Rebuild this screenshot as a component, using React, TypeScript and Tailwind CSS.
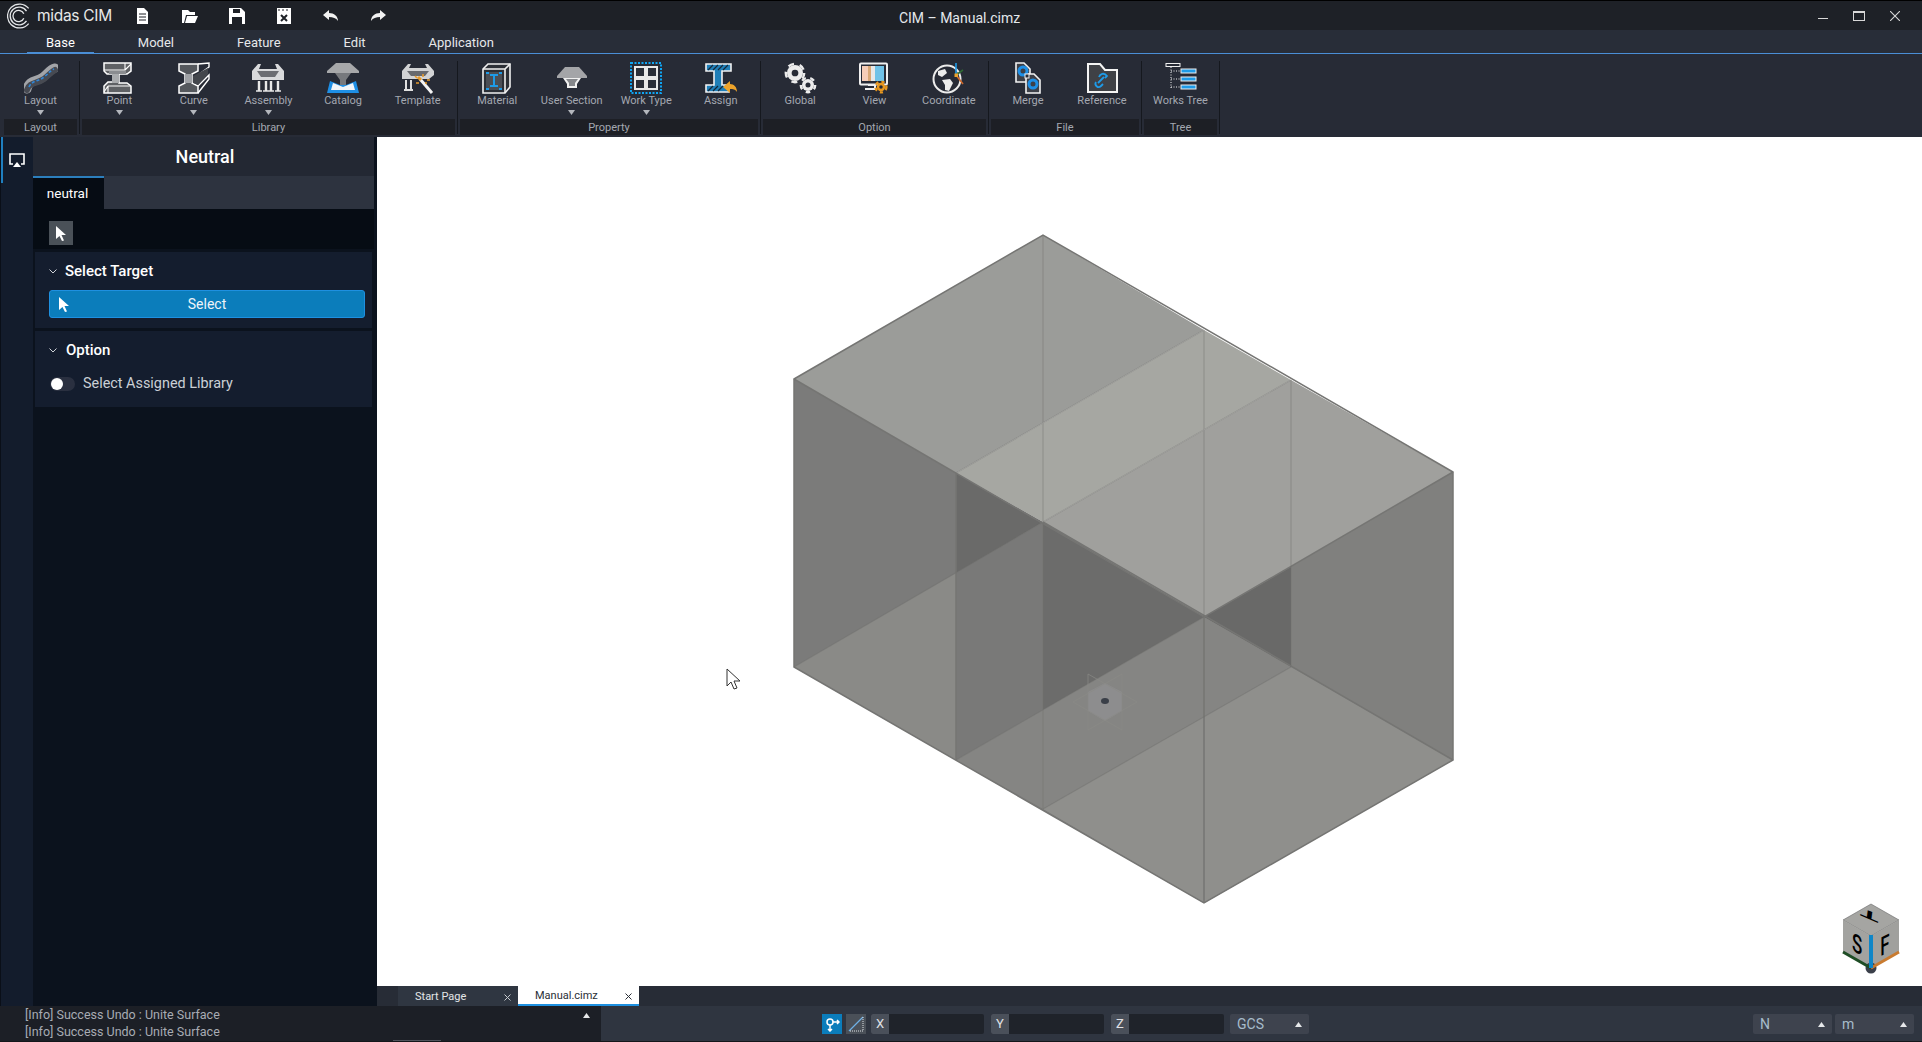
import type { ReactNode } from 'react';

const Ico = ({ children }: { children: ReactNode }) => (
  <svg width="34" height="32" viewBox="0 0 34 32" fill="none">
    {children}
  </svg>
);

const Gear = ({ x, y, r, fill, hole }: { x: number; y: number; r: number; fill: string; hole: string }) => (
  <g>
    <circle cx={x} cy={y} r={r} fill={fill} />
    <circle cx={x} cy={y} r={r + 1.2} stroke={fill} strokeWidth={2.4} strokeDasharray={`${r * 0.75} ${r * 0.75}`} />
    <circle cx={x} cy={y} r={r * 0.42} fill={hole} />
  </g>
);

const ICONS: Record<string, ReactNode> = {
  Layout: (
    <Ico>
      <path d="M3 27C5 17 13 20 19 15C24 11 26 7 31 6" stroke="#a2a4a8" strokeWidth="9" strokeLinecap="round" />
      <path d="M3 28C5 20 13 22 20 17C24 14 27 10 31 8" stroke="#474a52" strokeWidth="6" strokeLinecap="round" />
      <path d="M5 25C8 18 14 20 20 15C24 12 26 9 30 7" stroke="#2f86d8" strokeWidth="1.6" strokeDasharray="3 2" />
    </Ico>
  ),
  Point: (
    <Ico>
      <g transform="translate(-4 0)">
        <path d="M6 1H33V9L29 12H21V21H29L33 24V31H6V24L10 20H15V12H9L6 9Z" fill="#5f6165" stroke="#fff" strokeWidth="1.5" />
        <rect x="14" y="12" width="7" height="9" fill="#a9abae" />
        <path d="M6 8H27V1M27 8L33 2M10 24H33M10 24V31M10 24L6 30" stroke="#fff" strokeWidth="1.1" />
        <rect x="11" y="9" width="17" height="3" fill="#8a8c90" />
      </g>
    </Ico>
  ),
  Curve: (
    <Ico>
      <path d="M2 9V2H21V9L15 12V21L21 24V31H2V24L8 21V12Z" fill="#55585d" stroke="#fff" strokeWidth="1.5" />
      <path d="M21 2L32 1V5L21 13M21 24L32 13V17L21 31" stroke="#fff" strokeWidth="1.4" />
      <path d="M8 12H15V21H8Z" fill="#a0a2a6" />
      <path d="M16 14L31 6V12L21 23L16 21Z" fill="#43464c" />
    </Ico>
  ),
  Assembly: (
    <Ico>
      <path d="M1 18V9L7 2H10L8 7H26L24 2H27L33 9V18Z" fill="#d9dadc" />
      <path d="M6 9H28L24 15H10Z" fill="#6c6e73" />
      <path d="M8 19V29M15 19V29M20 19V29M27 19V29" stroke="#e8e8e8" strokeWidth="2.4" />
      <path d="M5 29H11M12 29H18M17 29H23M24 29H30" stroke="#e8e8e8" strokeWidth="1.5" />
    </Ico>
  ),
  Catalog: (
    <Ico>
      <path d="M10 1H24L33 9V11H1V9Z" fill="#a7a8aa" />
      <path d="M9 11H25L20 18V23H14V18Z" fill="#77797d" />
      <path d="M1 31L4 19L14 23H20L30 19L33 31Z" fill="#1e8fe6" />
      <path d="M5 28L7 21L17 25L27 21L29 28Z" fill="#f2f6fa" />
    </Ico>
  ),
  Template: (
    <Ico>
      <path d="M1 17V9L7 2H10L8 6H26L24 2H27L33 9V13L28 17Z" fill="#d2d3d5" />
      <path d="M6 9H28L24 14H10Z" fill="#67696e" />
      <path d="M5 18V28M10 18V28M3 28H12" stroke="#e0e0e0" strokeWidth="2" />
      <path d="M19 17L31 31" stroke="#f4f4f4" strokeWidth="3" />
      <path d="M17 15L20 18" stroke="#e79a2b" strokeWidth="3" />
      <path d="M22 12V15M15 21H18M26 18H29M14 14L16 16M25 22V20" stroke="#e79a2b" strokeWidth="1.6" />
    </Ico>
  ),
  Material: (
    <Ico>
      <g transform="translate(-1 0)">
        <path d="M4 7L9 2H31V25L26 31H4Z" fill="#2c2f36" stroke="#f0f0f0" strokeWidth="1.6" />
        <path d="M4 7H26V31M26 7L31 2" stroke="#f0f0f0" strokeWidth="1.6" />
        <rect x="7" y="10" width="16" height="18" fill="#4b4e55" />
        <path d="M11 13H19M15 13V24M11 24H19" stroke="#1e9be8" strokeWidth="2" />
        <path d="M7 11H10M20 11H23M7 27H10M20 27H23" stroke="#1e9be8" strokeWidth="2" />
      </g>
    </Ico>
  ),
  'User Section': (
    <Ico>
      <path d="M10 5H24L32 14V16H2V14Z" fill="#a4a5a8" />
      <path d="M8 16H26L22 22V26H12V22Z" fill="#f0f0f0" />
      <path d="M11 17H23L20 21V24H14V21Z" fill="#85878b" />
    </Ico>
  ),
  'Work Type': (
    <Ico>
      <rect x="2" y="1" width="30" height="30" stroke="#0ea5f4" strokeWidth="2" strokeDasharray="2 1.5" />
      <rect x="6" y="5" width="10" height="10" stroke="#e8e8e8" strokeWidth="2" fill="#2a2e38" />
      <rect x="18" y="5" width="10" height="10" stroke="#e8e8e8" strokeWidth="2" fill="#2a2e38" />
      <rect x="6" y="17" width="10" height="10" stroke="#e8e8e8" strokeWidth="2" fill="#2a2e38" />
      <rect x="18" y="17" width="10" height="10" stroke="#e8e8e8" strokeWidth="2" fill="#2a2e38" />
    </Ico>
  ),
  Assign: (
    <Ico>
      <path d="M2 2H27V9H18V23H25V30H2V23H10V9H2Z" fill="#1f7fb8" stroke="#f2f2f2" strokeWidth="1.6" />
      <path d="M4 8L9 3M9 8L14 3M14 8L19 3M19 8L24 3M4 29L9 24M9 29L14 24M14 29L19 24" stroke="#14283a" strokeWidth="1.2" />
      <path d="M19 25L26 19V22C30 22 33 25 33 30C31 27 29 27 26 27V31Z" fill="#eda32a" />
    </Ico>
  ),
  Global: (
    <Ico>
      <Gear x={12} y={11} r={8} fill="#ececec" hole="#272b36" />
      <Gear x={25} y={23} r={6} fill="#ececec" hole="#272b36" />
    </Ico>
  ),
  View: (
    <Ico>
      <rect x="3" y="1.5" width="27" height="21" rx="1" stroke="#f0f0f0" strokeWidth="2" />
      <rect x="5" y="4" width="6" height="15" fill="#f6cdb8" />
      <rect x="11" y="4" width="3" height="15" fill="#d9a877" />
      <rect x="14" y="4" width="4" height="15" fill="#e8e8e8" />
      <rect x="18" y="4" width="9" height="15" fill="#6fc2e8" />
      <path d="M11 23H18V27H8" stroke="#f0f0f0" strokeWidth="2" />
      <Gear x={24} y={25} r={4.2} fill="#e8981f" hole="#272b36" />
    </Ico>
  ),
  Coordinate: (
    <Ico>
      <circle cx="15" cy="17" r="13.5" stroke="#ececec" strokeWidth="2" />
      <path d="M6 9L13 7L15 11L10 15L6 13ZM10 18L18 17L21 21L17 29L13 28L13 23Z" fill="#ececec" />
      <path d="M24 1V13" stroke="#1e9be8" strokeWidth="1.6" />
      <path d="M24 13L31 8" stroke="#2f6a34" strokeWidth="1.6" />
      <path d="M24 13L31 22" stroke="#d0682a" strokeWidth="1.6" />
      <rect x="22.5" y="11.5" width="3.5" height="3.5" fill="#eda32a" />
    </Ico>
  ),
  Merge: (
    <Ico>
      <path d="M5 1H13L19 7V20H5Z" fill="#3d4048" stroke="#f2f2f2" strokeWidth="1.6" />
      <path d="M15 12H23L29 18V31H15Z" fill="#3d4048" stroke="#f2f2f2" strokeWidth="1.6" />
      <circle cx="12" cy="9" r="4" stroke="#1e8fe6" strokeWidth="3" />
      <circle cx="22" cy="22" r="4" stroke="#1e8fe6" strokeWidth="3" />
      <rect x="14" y="12" width="4" height="4" fill="#272b36" stroke="#f2f2f2" />
    </Ico>
  ),
  Reference: (
    <Ico>
      <path d="M3 2H15L20 8H32V30H3Z" fill="#3f4146" stroke="#f4f4f4" strokeWidth="2" />
      <path d="M13 21L19 15M11 20C9 23 13 27 16 24L18 22M20 16L22 14C19 10 15 12 14 15" stroke="#1e9be8" strokeWidth="1.8" />
    </Ico>
  ),
  'Works Tree': (
    <Ico>
      <rect x="2" y="1.5" width="14" height="3" stroke="#f0f0f0" />
      <path d="M7 5V26M7 9H17M7 17H17M7 25H17" stroke="#f0f0f0" strokeDasharray="1 1.5" />
      <rect x="17" y="7" width="15" height="4" fill="#1e9be8" stroke="#f0f0f0" />
      <rect x="17" y="15" width="15" height="4" fill="#1e9be8" stroke="#f0f0f0" />
      <rect x="17" y="23" width="15" height="4" fill="#1e9be8" stroke="#f0f0f0" />
    </Ico>
  ),
};

const GROUPS = [
  { name: 'Layout', w: 'w-[73px]', items: [['Layout', true]] },
  { name: 'Library', w: 'w-[373px]', items: [['Point', true], ['Curve', true], ['Assembly', true], ['Catalog', false], ['Template', false]] },
  { name: 'Property', w: 'w-[298px]', items: [['Material', false], ['User Section', true], ['Work Type', true], ['Assign', false]] },
  { name: 'Option', w: 'w-[223px]', items: [['Global', false], ['View', false], ['Coordinate', false]] },
  { name: 'File', w: 'w-[148px]', items: [['Merge', false], ['Reference', false]] },
  { name: 'Tree', w: 'w-[73px]', items: [['Works Tree', false]] },
] as { name: string; w: string; items: [string, boolean][] }[];

const Caret = ({ up }: { up?: boolean }) => (
  <svg width="7" height="5" viewBox="0 0 7 5" className={up ? 'rotate-180' : ''}>
    <path d="M0 0H7L3.5 5Z" fill={up ? '#e6e8ea' : '#b4b7bd'} />
  </svg>
);

const TitleIcon = ({ children }: { children: ReactNode }) => (
  <div className="flex w-[47px] justify-center">
    <svg width="16" height="16" viewBox="0 0 16 16">
      {children}
    </svg>
  </div>
);

function TitleBar() {
  return (
    <div className="flex h-[30px] items-center border-t border-black bg-[#1e2127] text-white">
      <svg width="26" height="26" viewBox="0 0 24 24" fill="none" className="ml-[7px]">
        <path d="M20 5A11 11 0 1 0 20 19M18 7.5A8.2 8.2 0 1 0 18 16.5M15.5 10A5.2 5.2 0 1 0 15.5 14" stroke="#e4e6e8" strokeWidth="1.2" />
      </svg>
      <span className="ml-[4px] w-[82px] font-['Inter',sans-serif] text-[15.5px] tracking-[-0.3px] text-[#e8e8e8]">midas CIM</span>
      <div className="flex">
        <TitleIcon>
          <path d="M2 0H9L13 4V16H2Z" fill="#fff" />
          <path d="M4 6H11M4 9H11M4 12H11" stroke="#1e2127" />
        </TitleIcon>
        <TitleIcon>
          <path d="M0 2H6L8 4H13V7H4L2 15H0ZM5 8H16L13 15H3Z" fill="#fff" />
        </TitleIcon>
        <TitleIcon>
          <path d="M0 0H12L16 4V16H0Z" fill="#fff" />
          <rect x="4" y="1" width="7" height="4" fill="#1e2127" />
          <rect x="3" y="9" width="10" height="7" fill="#1e2127" />
        </TitleIcon>
        <TitleIcon>
          <rect x="1" y="0" width="14" height="16" fill="#fff" />
          <path d="M2 2H4M6 2H8M10 2H12" stroke="#1e2127" />
          <path d="M5 7L11 13M11 7L5 13" stroke="#1e2127" strokeWidth="2" />
        </TitleIcon>
        <TitleIcon>
          <path d="M0 7L6 2V5C11 5 15 8 15 13C13 10 10 9 6 9V12Z" fill="#f2f2f2" />
        </TitleIcon>
        <TitleIcon>
          <path d="M16 7L10 2V5C5 5 1 8 1 13C3 10 6 9 10 9V12Z" fill="#f2f2f2" />
        </TitleIcon>
      </div>
      <div className="flex-1 pr-[300px] pt-[5px] text-center text-[14px] text-[#e4e8ec]">CIM – Manual.cimz</div>
      <div className="flex items-center pr-[22px]">
        <span className="h-[1px] w-[10px] translate-y-[3px] bg-[#d8d8d8]" />
        <span className="ml-[25px] h-[10px] w-[12px] border border-t-2 border-[#d8d8d8]" />
        <svg width="10" height="10" viewBox="0 0 10 10" className="ml-[25px]">
          <path d="M0 0L10 10M10 0L0 10" stroke="#d8d8d8" strokeWidth="1.1" />
        </svg>
      </div>
    </div>
  );
}

function Tabs() {
  return (
    <div className="flex h-[24px] gap-[25px] border-b border-[#4a8ed6] bg-[#282d38] pl-[27px] text-[13px] text-[#e6e8ea]">
      {['Base', 'Model', 'Feature', 'Edit', 'Application'].map((t, i) => (
        <div key={t} className={`-mb-px flex items-center border-b-2 px-[19px] pt-[3px] ${i === 0 ? 'border-[#4a8ed6] text-white' : 'border-transparent'}`}>
          {t}
        </div>
      ))}
    </div>
  );
}

function Ribbon() {
  return (
    <div className="flex h-[83px] bg-[#272b36] pl-[4px]">
      {GROUPS.map((g) => (
        <div key={g.name} className="flex">
          <div className={`flex flex-col ${g.w}`}>
            <div className="flex h-[65px]">
              {g.items.map(([label, caret]) => (
                <div key={label} className="flex flex-1 flex-col items-center pt-[8px]">
                  <div className="h-[32px]">{ICONS[label]}</div>
                  <div className="whitespace-nowrap text-[11px] leading-[14px] text-[#a3a7b0]">{label}</div>
                  {caret && (
                    <div className="mt-[2px] flex h-[5px]">
                      <Caret />
                    </div>
                  )}
                </div>
              ))}
            </div>
            <div className="flex h-[16px] items-center justify-center bg-[#1d1f25] pt-[2px] text-[11px] text-[#a3a7b0]">{g.name}</div>
          </div>
          <div className="mx-[2px] mb-[3px] mt-[7px] w-[1px] bg-[#15181e]" />
        </div>
      ))}
    </div>
  );
}

const Cursor = ({ className }: { className?: string }) => (
  <svg width="11" height="15" viewBox="0 0 11 15" className={className}>
    <path d="M0 0L10 9H5.5L8 14.5L6 15L3.5 10L0 13Z" fill="#fff" />
  </svg>
);

const Chevron = () => (
  <svg width="8" height="5" viewBox="0 0 8 5" fill="none">
    <path d="M0.5 0.5L4 4L7.5 0.5" stroke="#cfd3d8" />
  </svg>
);

function Sidebar() {
  return (
    <div className="flex w-[377px] bg-[#0b121d]">
      <div className="w-[33px] border-l border-[#0a0f18] bg-[#131c2c]">
        <div className="flex h-[46px] items-center justify-center border-l-2 border-[#1f7fc0] pr-[2px]">
          <svg width="16" height="15" viewBox="0 0 16 15" fill="none">
            <path d="M4 11H1V1H15V11H12" stroke="#fff" strokeWidth="1.6" />
            <path d="M8 9L12 14H4Z" fill="#fff" />
          </svg>
        </div>
      </div>
      <div className="flex w-[341px] flex-col">
        <div className="flex h-[39px] items-center justify-center bg-[#232833] pl-[3px] text-[18px] font-medium text-white">Neutral</div>
        <div className="flex h-[33px] bg-[#2d333f]">
          <div className="flex w-[71px] items-center justify-center border-t-2 border-[#2c7fbd] bg-[#060c14] pr-[2px] text-[13.5px] text-white">neutral</div>
        </div>
        <div className="flex h-[40px] items-start bg-[#060c14] pl-[16px] pt-[12px]">
          <div className="flex h-[24px] w-[24px] items-center justify-center bg-[#4a5158]">
            <Cursor />
          </div>
        </div>
        <div className="flex flex-col gap-[3px] px-[2px] pt-[3px]">
          <div className="h-[76px] bg-[#141d2e] pl-[14px] pr-[7px]">
            <div className="flex h-[38px] items-center gap-[8px] text-[15px] font-medium text-white">
              <Chevron />
              Select Target
            </div>
            <div className="relative flex h-[28px] items-center justify-center rounded-[3px] border border-[#1e90e0] bg-[#0b7dbb] text-[14px] text-[#eef4f8]">
              <Cursor className="absolute left-[9px] top-[6px]" />
              Select
            </div>
          </div>
          <div className="h-[76px] bg-[#141d2e] pl-[14px] pr-[7px]">
            <div className="flex h-[38px] items-center gap-[9px] text-[15px] font-medium text-white">
              <Chevron />
              Option
            </div>
            <div className="flex h-[26px] items-center gap-[8px] pl-[1px] pt-[3px] text-[14.4px] text-[#cbd0d6]">
              <div className="flex h-[14px] w-[25px] items-center rounded-full bg-[#2a3040]">
                <div className="ml-[1px] h-[12px] w-[12px] rounded-full bg-white" />
              </div>
              Select Assigned Library
            </div>
          </div>
        </div>
      </div>
    </div>
  );
}

const Region = ({ d, fill }: { d: string; fill: string }) => <polygon points={d} fill={fill} />;

function Viewport() {
  return (
    <div className="relative flex-1 bg-white">
      <svg className="absolute inset-0 h-full w-full" viewBox="377 137 1545 849">
        {/* side faces */}
        <Region d="794,379 1204,617 1204,903 794,667" fill="#7b7b7a" />
        <Region d="1204,617 1453,472 1453,760 1204,903" fill="#80807e" />
        {/* top face */}
        <Region d="794,379 1043,235 1204,330 956,473" fill="#9b9c99" />
        <Region d="956,473 1204,330 1291,380 1043,522" fill="#a6a7a2" />
        <Region d="1043,522 1291,380 1453,472 1204,617" fill="#a0a09d" />
        {/* darker wedges seen through the walls */}
        <Region d="956,473 1043,522 956,573" fill="#6a6a69" />
        <Region d="1043,522 1204,617 1043,710" fill="#6c6c6b" />
        <Region d="956,573 1043,522 1043,710 956,760" fill="#797978" />
        <Region d="1204,617 1291,567 1291,667" fill="#696968" />
        {/* floor seen through the front faces */}
        <Region d="794,667 956,573 956,760" fill="#8a8a87" />
        <Region d="956,760 1204,617 1291,667 1043,809" fill="#858583" />
        <Region d="1043,809 1291,667 1453,760 1204,903" fill="#8f8f8c" />
        {/* edges */}
        <g fill="none" stroke="#757573" strokeWidth="1.5">
          <path d="M794 379L1043 235L1453 472V760L1204 903L794 667Z" />
          <path d="M794 379L1204 617L1453 472M1204 617V903" />
          <path d="M1043 522L1453 760M956 473V760" />
        </g>
        <g fill="none" stroke="#70706e" strokeOpacity="0.4" strokeWidth="1.2">
          <path d="M956 760L1204 617M1043 809L1291 667M1291 380V667" />
          <path d="M1043 235V809M1204 330V617M956 473L1204 330M1043 522L1291 380M794 667L1043 522" />
        </g>
        {/* origin marker */}
        <polygon points="1105,683 1122,692 1122,711 1105,721 1088,711 1088,692" fill="#9899a0" fillOpacity="0.4" />
        <path d="M1088 674V730L1137 702ZM1122 674V730L1073 702Z" fill="none" stroke="#8a8a86" strokeOpacity="0.7" />
        <ellipse cx="1105" cy="701" rx="4" ry="3" fill="#3a3f48" />
        {/* mouse pointer */}
        <path d="M727 669V686L731 682L734 689L737 688L734 681H740Z" fill="#fff" stroke="#333" strokeWidth="1" />
        {/* view cube */}
        <path d="M1843 920L1871 904L1899 920L1871 936Z" fill="#a5a5a2" stroke="#666" strokeWidth="0.6" />
        <path d="M1843 920L1871 936V968L1843 952Z" fill="#a3a3a0" />
        <path d="M1899 920L1871 936V968L1899 952Z" fill="#a0a09d" />
        <circle cx="1871" cy="968" r="5.5" fill="#3a3f4a" />
        <path d="M1843 952L1871 968" stroke="#1f4d25" strokeWidth="3" />
        <path d="M1871 968L1899 952" stroke="#c97b30" strokeWidth="3" />
        <path d="M1871 935V968" stroke="#0e86c8" strokeWidth="4" />
        <text x="0" y="0" fontSize="14" fontWeight="700" fill="#000" fontFamily="Roboto, sans-serif" transform="matrix(2.2 .95 .1 -.8 1870 911)" textAnchor="middle">T</text>
        <text x="0" y="0" fontSize="26" fontWeight="500" fill="#000" fontFamily="Roboto, sans-serif" transform="matrix(.65 .3 0 1 1857 953)" textAnchor="middle">S</text>
        <text x="0" y="0" fontSize="26" fontWeight="500" fill="#000" fontFamily="Roboto, sans-serif" transform="matrix(.65 -.32 0 1 1885 954)" textAnchor="middle">F</text>
      </svg>
    </div>
  );
}

const CloseX = ({ color }: { color: string }) => (
  <svg width="7" height="7" viewBox="0 0 7 7">
    <path d="M0.5 0.5L6.5 6.5M6.5 0.5L0.5 6.5" stroke={color} />
  </svg>
);

function DocTabs() {
  return (
    <div className="flex h-[20px] bg-[#272c36] pl-[21px] text-[11px]">
      <div className="flex w-[120px] items-center justify-between bg-[#2f3641] pl-[17px] pr-[7px] pt-[2px] text-[#e4e6e8]">
        Start Page <CloseX color="#c8ccd0" />
      </div>
      <div className="flex w-[121px] items-center justify-between border-b-2 border-[#1e90e0] bg-white pl-[17px] pr-[7px] pt-[2px] text-[#2a2e36]">
        Manual.cimz <CloseX color="#2a2e36" />
      </div>
    </div>
  );
}

const Coord = ({ l }: { l: string }) => (
  <div className="flex h-[20px] w-[113px] overflow-hidden rounded-[2px] bg-[#1f232a]">
    <div className="flex w-[18px] items-center justify-center bg-[#4a505a] text-[13px] text-[#e0e2e6]">{l}</div>
  </div>
);

const Drop = ({ l }: { l: string }) => (
  <div className="flex h-[20px] w-[79px] items-center justify-between rounded-[2px] bg-[#3e434e] pl-[7px] pr-[7px] text-[14px] text-[#a6bccb]">
    {l}
    <Caret up />
  </div>
);

function StatusBar() {
  return (
    <div className="flex h-[36px] border-b border-[#14161a] bg-[#2f3540]">
      <div className="relative flex w-[601px] flex-col justify-center bg-[#1c1f26] pb-[2px] pl-[25px] text-[12.5px] leading-[17px] text-[#a8acb4]">
        <div>[Info] Success Undo : Unite Surface</div>
        <div>[Info] Success Undo : Unite Surface</div>
        <div className="absolute right-[11px] top-[7px]">
          <Caret up />
        </div>
        <div className="absolute bottom-0 left-[393px] h-[1px] w-[48px] bg-[#50545c]" />
      </div>
      <div className="flex flex-1 pt-[8px]">
        <div className="ml-[221px] flex h-[20px] w-[20px] items-center justify-center bg-[#0b7dbb]">
          <svg width="16" height="16" viewBox="0 0 16 16" fill="none" stroke="#fff" strokeWidth="1.5">
            <circle cx="6" cy="6" r="3" />
            <path d="M9 6H15M13 4L15 6L13 8M6 9V15M4 13L6 15L8 13" />
          </svg>
        </div>
        <div className="ml-[4px] flex h-[20px] w-[20px] items-center justify-center bg-[#4a5058]">
          <svg width="16" height="16" viewBox="0 0 16 16" fill="none">
            <path d="M1 15L15 1" stroke="#6fb0e4" strokeWidth="1.2" />
            <path d="M15 1V15H1" stroke="#dfe3e6" strokeDasharray="1 1" />
          </svg>
        </div>
        <div className="ml-[5px] flex gap-[7px]">
          <Coord l="X" />
          <Coord l="Y" />
          <Coord l="Z" />
        </div>
        <div className="ml-[6px]">
          <Drop l="GCS" />
        </div>
        <div className="ml-[444px] flex gap-[3px]">
          <Drop l="N" />
          <Drop l="m" />
        </div>
      </div>
    </div>
  );
}

export default function App() {
  return (
    <div className="flex h-[1042px] w-[1922px] flex-col overflow-hidden bg-[#1e2127] font-['Roboto',sans-serif]">
      <TitleBar />
      <Tabs />
      <Ribbon />
      <div className="flex min-h-0 flex-1">
        <Sidebar />
        <div className="flex flex-1 flex-col">
          <Viewport />
          <DocTabs />
        </div>
      </div>
      <StatusBar />
    </div>
  );
}
